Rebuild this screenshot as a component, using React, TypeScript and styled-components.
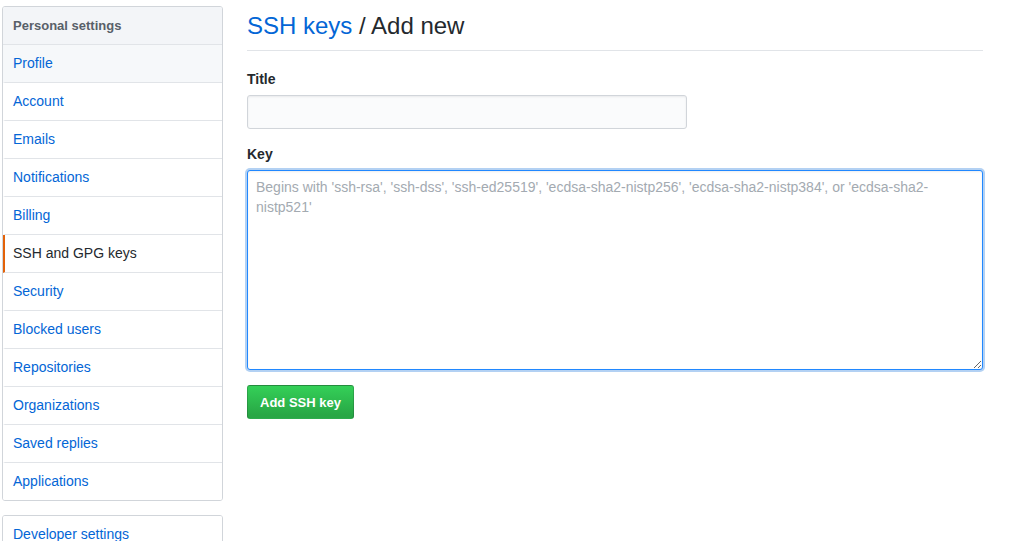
import React from 'react';
import styled, { createGlobalStyle } from 'styled-components';

const GlobalStyle = createGlobalStyle`
	body {
		margin: 0;
		background: #fff;
		font-family: 'Liberation Sans', Arial, sans-serif;
		font-size: 14px;
		color: #24292e;
	}
`;

const items = [
	'Profile',
	'Account',
	'Emails',
	'Notifications',
	'Billing',
	'SSH and GPG keys',
	'Security',
	'Blocked users',
	'Repositories',
	'Organizations',
	'Saved replies',
	'Applications',
];

const App = () => {
	return (
		<Page>
			<GlobalStyle />
			<Sidebar>
				<Menu>
					<MenuHeading>Personal settings</MenuHeading>
					{items.map((item) => (
						<MenuItem
							key={item}
							selected={item === 'SSH and GPG keys'}
							hovered={item === 'Profile'}
						>
							{item}
						</MenuItem>
					))}
				</Menu>
				<Menu>
					<MenuItem>Developer settings</MenuItem>
				</Menu>
			</Sidebar>

			<Main>
				<Subhead>
					<SubheadLink>SSH keys</SubheadLink> / Add new
				</Subhead>
				<Field>
					<Label>Title</Label>
					<TitleInput type='text' />
				</Field>
				<Field>
					<Label>Key</Label>
					<KeyArea
						autoFocus
						placeholder="Begins with 'ssh-rsa', 'ssh-dss', 'ssh-ed25519', 'ecdsa-sha2-nistp256', 'ecdsa-sha2-nistp384', or 'ecdsa-sha2-nistp521'"
					/>
				</Field>
				<SubmitButton>Add SSH key</SubmitButton>
			</Main>
		</Page>
	);
};

export default App;

const Page = styled.div`
	display: flex;
	align-items: flex-start;
	padding: 6px 0 0 2px;
	height: 535px;
	overflow: hidden;
`;

const Sidebar = styled.nav`
	width: 221px;
	flex-shrink: 0;
	display: flex;
	flex-direction: column;
	gap: 14px;
`;

const Menu = styled.div`
	border: 1px solid #d1d5da;
	border-radius: 3px;
	background: #fff;
	overflow: hidden;
`;

const MenuHeading = styled.div`
	height: 37px;
	line-height: 37px;
	padding: 0 10px;
	background: #f3f5f8;
	color: #586069;
	font-size: 13px;
	font-weight: 700;
	border-bottom: 1px solid #e1e4e8;
`;

const MenuItem = styled.div<{ selected?: boolean; hovered?: boolean }>`
	height: 37px;
	line-height: 37px;
	padding: 0 10px 0 8px;
	border-bottom: 1px solid #e1e4e8;
	border-left: 2px solid ${({ selected }) => (selected ? '#e36209' : 'transparent')};
	color: ${({ selected }) => (selected ? '#24292e' : '#0366d6')};
	background: ${({ hovered }) => (hovered ? '#f6f8fa' : '#fff')};
	font-size: 14px;

	&:last-child {
		border-bottom: none;
	}
`;

const Main = styled.main`
	margin-left: 24px;
	width: 736px;
`;

const Subhead = styled.h2`
	margin: 0 0 18px;
	padding: 4px 0 9px;
	border-bottom: 1px solid #e1e4e8;
	font-size: 24px;
	font-weight: 400;
	line-height: 31px;
	color: #24292e;
`;

const SubheadLink = styled.a`
	color: #0366d6;
	text-decoration: none;
`;

const Field = styled.div`
	margin-bottom: 15px;
`;

const Label = styled.label`
	display: block;
	font-weight: 700;
	font-size: 14px;
	line-height: 20px;
	margin: 0 0 6px;
`;

const TitleInput = styled.input`
	box-sizing: border-box;
	width: 440px;
	height: 34px;
	padding: 6px 8px;
	border: 1px solid #d1d5da;
	border-radius: 3px;
	background: #fafbfc;
	box-shadow: inset 0 1px 2px rgba(27, 31, 35, 0.075);
	font: inherit;
	outline: none;
`;

const KeyArea = styled.textarea`
	box-sizing: border-box;
	display: block;
	width: 736px;
	height: 200px;
	padding: 6px 8px;
	border: 1px solid #2188ff;
	border-radius: 3px;
	background: #fff;
	box-shadow: inset 0 1px 2px rgba(27, 31, 35, 0.075), 0 0 0 2px rgba(3, 102, 214, 0.3);
	font-family: 'Liberation Sans', Arial, sans-serif;
	font-size: 14px;
	line-height: 20px;
	color: #24292e;
	outline: none;
	resize: vertical;

	&::placeholder {
		color: #a3aab1;
	}
`;

const SubmitButton = styled.button`
	display: block;
	height: 34px;
	padding: 0 12px;
	border: 1px solid rgba(27, 31, 35, 0.2);
	border-radius: 3px;
	background: linear-gradient(-180deg, #34d058 0%, #28a745 90%);
	color: #fff;
	font-family: 'Liberation Sans', Arial, sans-serif;
	font-size: 13px;
	font-weight: 700;
	cursor: pointer;
`;
